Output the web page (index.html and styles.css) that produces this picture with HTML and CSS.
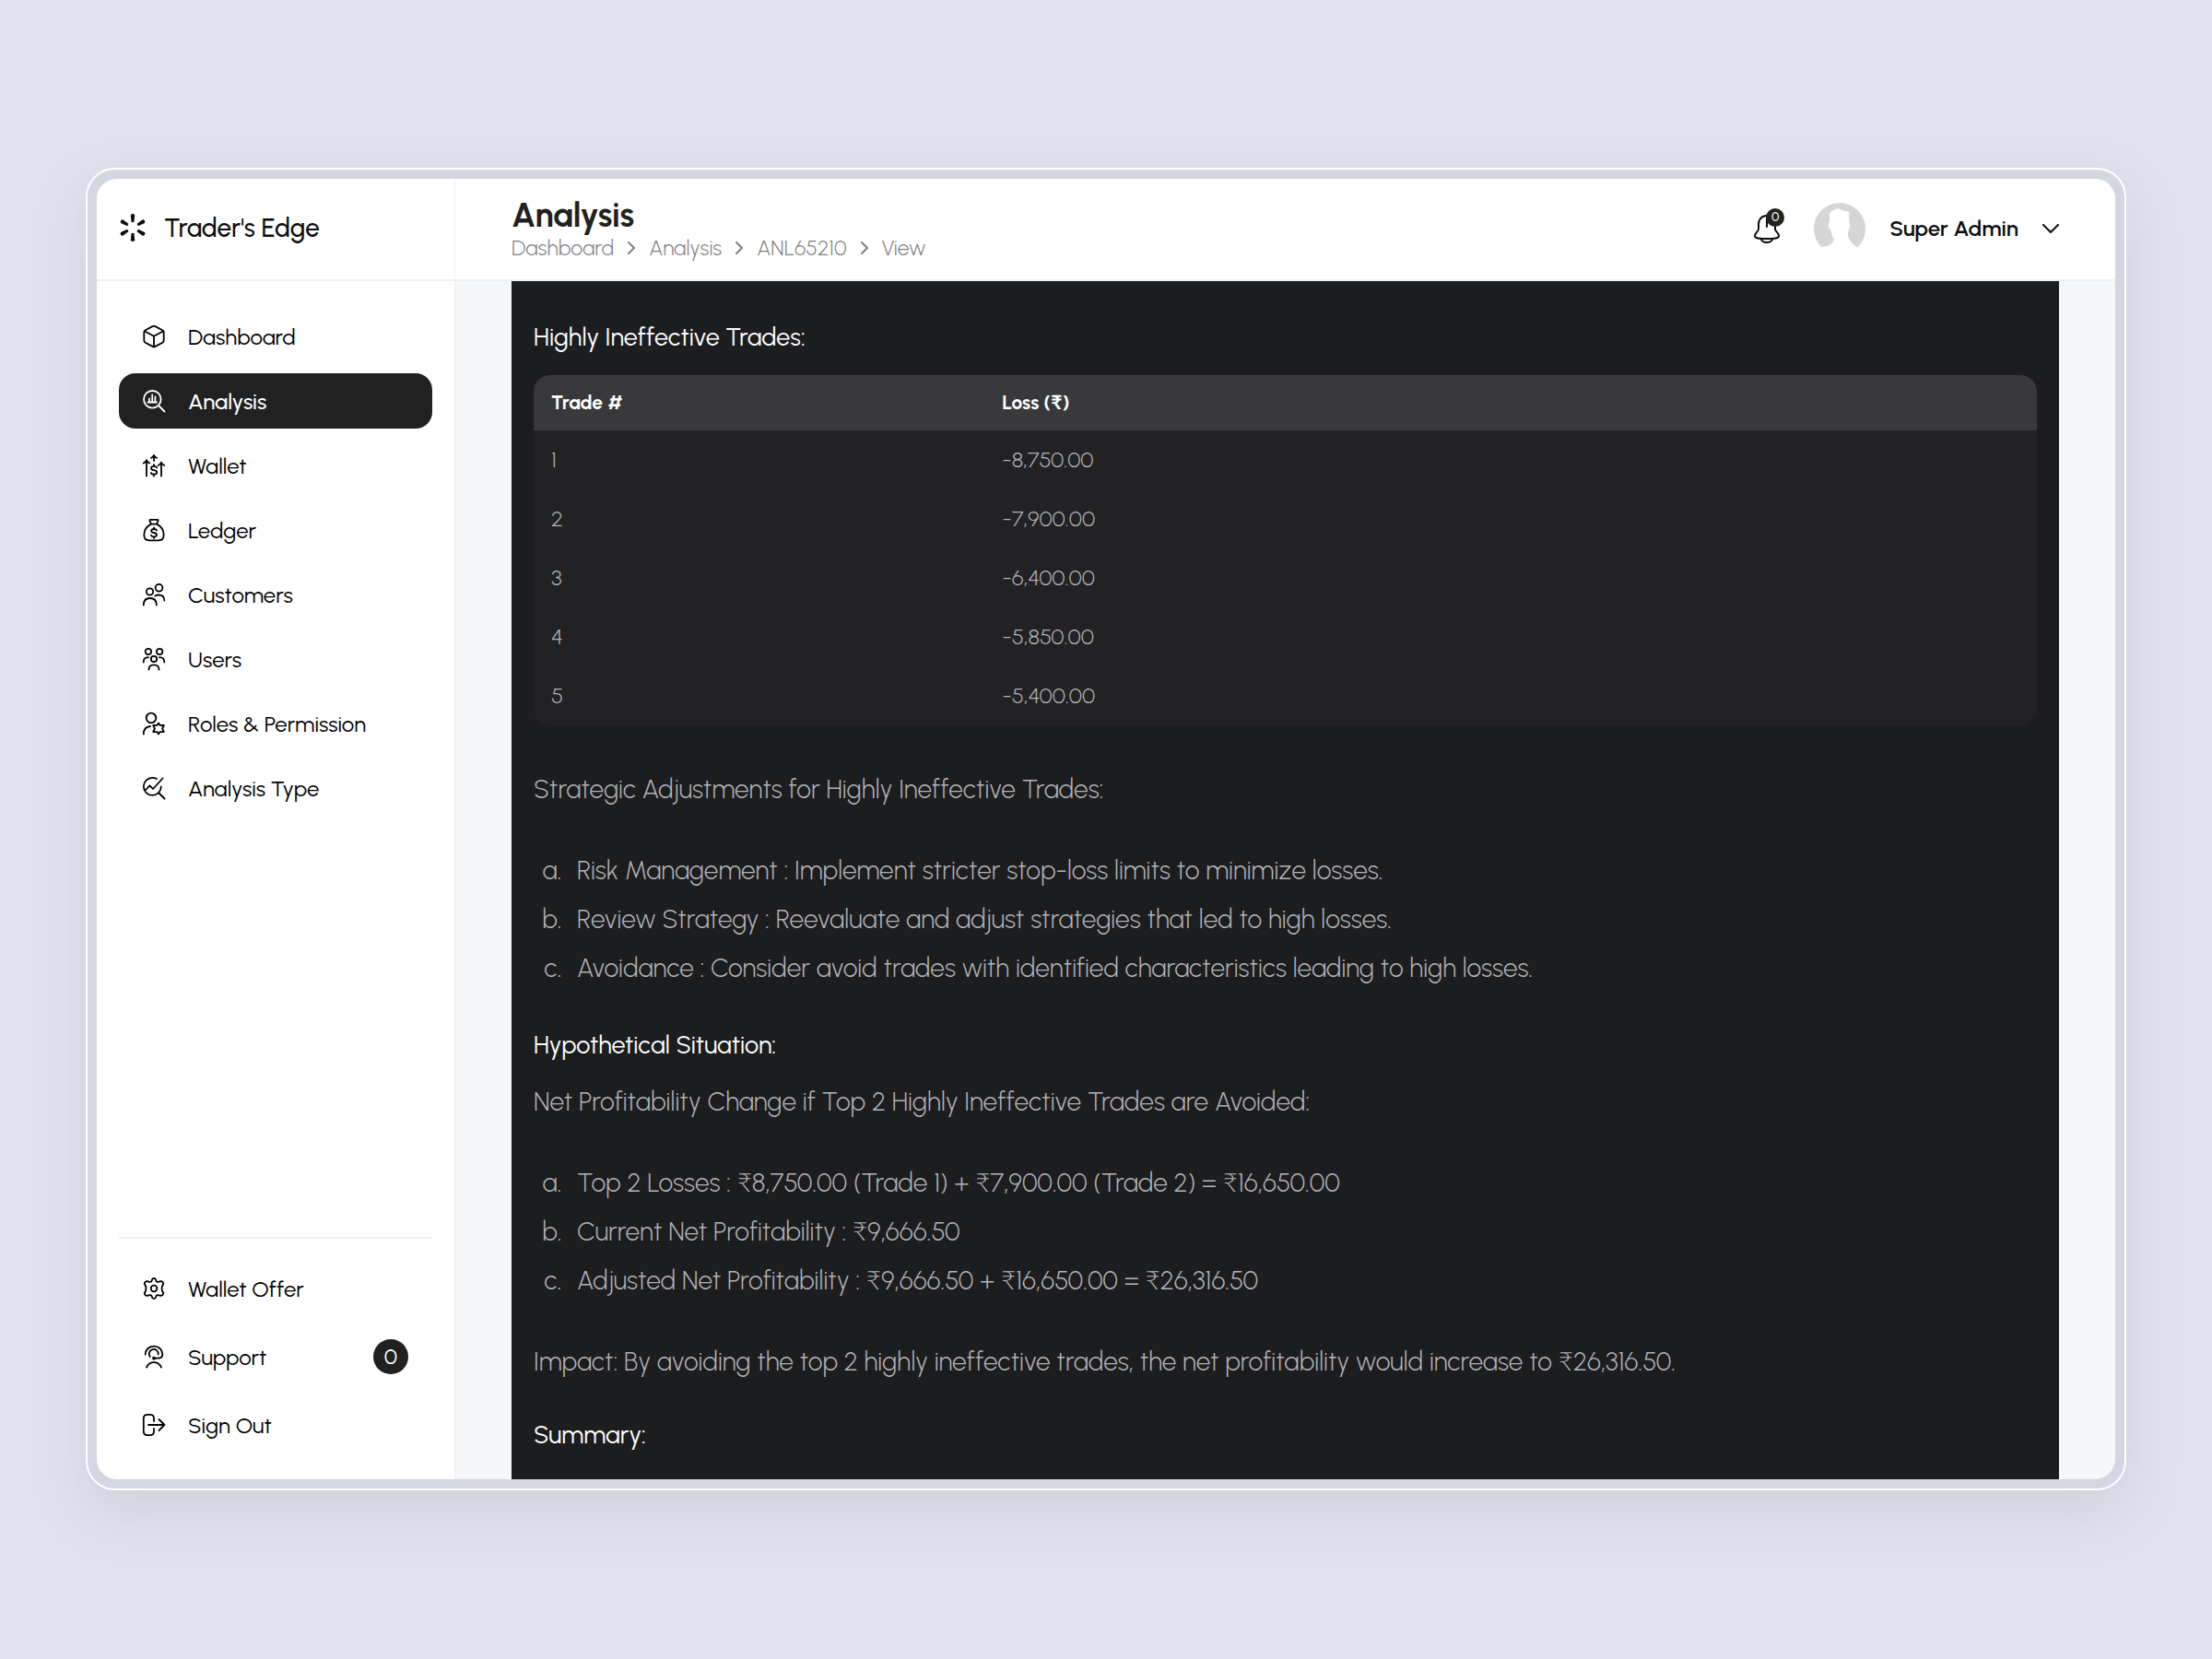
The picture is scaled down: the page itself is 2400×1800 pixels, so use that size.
FILE: index.html
```html
<!DOCTYPE html>
<html lang="en">
<head>
    <meta charset="UTF-8">
    <meta name="viewport" content="width=device-width, initial-scale=1.0">
    <title>Trader's Edge - Analysis</title>
    <link rel="stylesheet" href="styles.css">
</head>
<body>
    <div class="frame">
        <div class="window">
            <aside class="sidebar">
                <a href="#" class="brand">
                    <svg class="brand-logo" viewBox="-15 -15 30 30" aria-hidden="true">
                        <defs>
                            <path id="spoke" d="M-2.2 -13.2Q-2.1 -15 0 -15Q2.1 -15 2.2 -13.2L1.5 -6.6Q1.2 -5.8 0 -5.8Q-1.2 -5.8 -1.5 -6.6Z"/>
                        </defs>
                        <use href="#spoke"/>
                        <use href="#spoke" transform="rotate(60)"/>
                        <use href="#spoke" transform="rotate(120)"/>
                        <use href="#spoke" transform="rotate(180)"/>
                        <use href="#spoke" transform="rotate(240)"/>
                        <use href="#spoke" transform="rotate(300)"/>
                    </svg>
                    <span>Trader's Edge</span>
                </a>

                <nav class="menu">
                    <a href="#" class="menu-item">
                        <svg class="icon" viewBox="0 0 24 24"><path d="M10.5 1.1Q12 .3 13.500 1.100L21.300 5.300Q22.700 6.100 22.700 7.600V16.400Q22.700 17.900 21.300 18.700L13.500 22.900Q12 23.700 10.500 22.900L2.700 18.700Q1.300 17.900 1.300 16.400V7.600Q1.300 6.100 2.700 5.300ZM1.800 6.300L12 11.800L22.200 6.300M12 11.800V23.200"/></svg>
                        <span>Dashboard</span>
                    </a>
                    <a href="#" class="menu-item active">
                        <svg class="icon" viewBox="0 0 24 24"><circle cx="10.300" cy="10.300" r="9.300"/><path d="M17 17L23.500 23.500M5.500 13.500H15M7 13V9.500M10.200 13V5.500M13.400 13V7.500"/></svg>
                        <span>Analysis</span>
                    </a>
                    <a href="#" class="menu-item">
                        <svg class="icon" viewBox="0 0 24 24"><path d="M4 23.500V6.500M.7 9.500Q3.300 8.500 4 6.200Q4.700 8.500 7.300 9.500M20 23.500V9.500M16.700 12Q19.300 11 20 8.700Q20.700 11 23.300 12M12 7V.8M9 3.800Q11.400 3 12 .8Q12.600 3 15 3.800M15.200 14.300Q14.600 12.800 12 12.800Q9 12.800 9 15Q9 16.800 12 17.200Q15.200 17.600 15.200 19.600Q15.200 21.700 12 21.700Q9.300 21.700 8.800 20M12 11V12.800M12 21.700V23.500"/></svg>
                        <span>Wallet</span>
                    </a>
                    <a href="#" class="menu-item">
                        <svg class="icon" viewBox="0 0 24 24"><path d="M9 5.600L7.400 1.800Q7.200 .9 8.200 .9H15.800Q16.800 .9 16.600 1.800L15 5.600ZM9 5.600C4 8 1.300 13 1.300 17.500C1.300 21.500 3.200 23.300 7 23.300H17C20.800 23.300 22.700 21.500 22.700 17.500C22.700 13 20 8 15 5.600M9 5.600H15M15 12.500Q14.500 11 12 11Q9.200 11 9.200 13Q9.200 14.600 12 15Q15 15.400 15 17.200Q15 19.300 12 19.300Q9.500 19.300 9 17.700M12 9.300V11M12 19.300V21"/></svg>
                        <span>Ledger</span>
                    </a>
                    <a href="#" class="menu-item">
                        <svg class="icon" viewBox="0 0 24 24"><circle cx="7.500" cy="9" r="3.700"/><circle cx="17.500" cy="4.800" r="3.900"/><path d="M.8 23.500C.8 18.500 3.500 16 7.800 16C12.100 16 14.800 18.500 14.800 23.500M13.300 13.500Q15 12.500 17 12.500C21 12.500 23.300 14.500 23.300 18.500"/></svg>
                        <span>Customers</span>
                    </a>
                    <a href="#" class="menu-item">
                        <svg class="icon" viewBox="0 0 24 24"><circle cx="5.900" cy="4" r="3.200"/><circle cx="18.100" cy="4" r="3.200"/><circle cx="12" cy="12" r="3.200"/><path d="M.7 15.500C.7 12 2.500 10.200 6 10.200M23.300 15.500C23.300 12 21.500 10.200 18 10.200M6.500 23.500C6.500 20 8.500 18.300 12 18.300C15.500 18.300 17.500 20 17.500 23.500"/></svg>
                        <span>Users</span>
                    </a>
                    <a href="#" class="menu-item">
                        <svg class="icon" viewBox="0 0 24 24"><circle cx="9" cy="6" r="5.300"/><path d="M.8 23.500C.8 18.500 3.500 15.500 8 15M17 11.500L18.600 13.900L22.800 14L21.100 17.500L22.800 21L18.600 21.100L17 23.500L15.400 21.100L11.200 21L12.900 17.500L11.200 14L15.400 13.900Z"/></svg>
                        <span>Roles &amp; Permission</span>
                    </a>
                    <a href="#" class="menu-item">
                        <svg class="icon" viewBox="0 0 24 24"><path d="M15 2Q12.800 .8 10.300 .8A9.500 9.500 0 1 0 19.800 10.300M17 17L23.500 23.500M2.500 14.500L7.500 9.300L11 13L21.500 1.500"/></svg>
                        <span>Analysis Type</span>
                    </a>
                </nav>

                <nav class="menu menu-bottom">
                    <a href="#" class="menu-item">
                        <svg class="icon" viewBox="0 0 24 24"><circle cx="12" cy="12" r="3.300"/><path d="M10.200 2Q12 -.3 13.800 2L14.600 4.200Q15.500 5.200 16.900 4.800L19.200 4.200Q22 4.200 22.300 7L20.900 9.500Q20.200 12 20.900 14.500L22.300 17Q22 19.800 19.200 19.800L16.900 19.200Q15.500 18.800 14.600 19.800L13.800 22Q12 24.300 10.200 22L9.400 19.800Q8.500 18.800 7.100 19.200L4.800 19.800Q2 19.800 1.700 17L3.100 14.500Q3.800 12 3.100 9.500L1.700 7Q2 4.200 4.800 4.200L7.100 4.800Q8.500 5.200 9.400 4.200Z"/></svg>
                        <span>Wallet Offer</span>
                    </a>
                    <a href="#" class="menu-item">
                        <svg class="icon" viewBox="0 0 24 24"><path d="M2.700 9.500A9.300 8.800 0 1 1 21.300 9.200Q21.300 13.700 16.500 13.700H12M7.800 12A5 5 0 1 1 16.700 9.500M4 23.500Q6.500 18.200 12 18.200Q17.500 18.200 20 23.500"/><circle cx="12" cy="13.700" r="1"/></svg>
                        <span>Support</span>
                        <span class="count">0</span>
                    </a>
                    <a href="#" class="menu-item">
                        <svg class="icon" viewBox="0 0 24 24"><path d="M12 8V5Q12 .8 7.800 .8H5Q.8 .8 .8 5V19Q.8 23.200 5 23.200H7.800Q12 23.200 12 19V16M6 12H23.500M17.500 6L23.500 12L17.500 18"/></svg>
                        <span>Sign Out</span>
                    </a>
                </nav>
            </aside>

            <div class="main">
                <header class="topbar">
                    <div class="page-title">
                        <h1>Analysis</h1>
                        <nav class="breadcrumb">
                            <a href="#">Dashboard</a>
                            <svg viewBox="0 0 8 14"><path d="M1 1L7 7L1 13"/></svg>
                            <a href="#">Analysis</a>
                            <svg viewBox="0 0 8 14"><path d="M1 1L7 7L1 13"/></svg>
                            <a href="#">ANL65210</a>
                            <svg viewBox="0 0 8 14"><path d="M1 1L7 7L1 13"/></svg>
                            <span>View</span>
                        </nav>
                    </div>
                    <div class="topbar-right">
                        <button type="button" class="bell" aria-label="Notifications">
                            <svg viewBox="0 0 30 32"><path d="M15 2C9 2 6 6.500 6 11.500V16.500C6 19 2 20.500 2 24C2 26.500 6 27 15 27C24 27 28 26.500 28 24C28 20.500 24 19 24 16.500V11.500C24 6.500 21 2 15 2ZM8.500 27C9.500 30 12 31 15 31C18 31 20.500 30 21.500 27M15 5V14"/></svg>
                            <span class="bell-count">0</span>
                        </button>
                        <button type="button" class="profile">
                            <svg class="avatar" viewBox="0 0 56 56" aria-hidden="true">
                                <circle cx="28" cy="28" r="28" fill="#d6d6d5"/>
                                <path fill="#fff" d="M17 13C18 9 21 8 26 6C29 8 34 9 39 10C37 13 39 18 38 21C40 23 39 27 38 29C36 34 37 38 40 42Q43 46 47 48H56V56H0V48H9Q19 47 22 40C20 37 19 33 18 29C15 27 15 23 17 21Z"/>
                            </svg>
                            <span>Super Admin</span>
                            <svg class="arrow" viewBox="0 0 18 10"><path d="M1 1L9 9L17 1"/></svg>
                        </button>
                    </div>
                </header>

                <div class="content">
                    <article class="report">
                        <h3>Highly Ineffective Trades:</h3>
                        <table class="trades">
                            <thead>
                                <tr><th>Trade #</th><th>Loss (₹)</th></tr>
                            </thead>
                            <tbody>
                                <tr><td>1</td><td>-8,750.00</td></tr>
                                <tr><td>2</td><td>-7,900.00</td></tr>
                                <tr><td>3</td><td>-6,400.00</td></tr>
                                <tr><td>4</td><td>-5,850.00</td></tr>
                                <tr><td>5</td><td>-5,400.00</td></tr>
                            </tbody>
                        </table>

                        <p>Strategic Adjustments for Highly Ineffective Trades:</p>
                        <ol>
                            <li>Risk Management : Implement stricter stop-loss limits to minimize losses.</li>
                            <li>Review Strategy : Reevaluate and adjust strategies that led to high losses.</li>
                            <li>Avoidance : Consider avoid trades with identified characteristics leading to high losses.</li>
                        </ol>

                        <h3>Hypothetical Situation:</h3>
                        <p>Net Profitability Change if Top 2 Highly Ineffective Trades are Avoided:</p>
                        <ol>
                            <li>Top 2 Losses : ₹8,750.00 (Trade 1) + ₹7,900.00 (Trade 2) = ₹16,650.00</li>
                            <li>Current Net Profitability : ₹9,666.50</li>
                            <li>Adjusted Net Profitability : ₹9,666.50 + ₹16,650.00 = ₹26,316.50</li>
                        </ol>
                        <p>Impact: By avoiding the top 2 highly ineffective trades, the net profitability would increase to ₹26,316.50.</p>

                        <h3>Summary:</h3>
                    </article>
                </div>
            </div>
        </div>
    </div>
</body>
</html>
```

FILE: styles.css
```css
* {
    margin: 0;
    padding: 0;
    box-sizing: border-box;
}

body {
    height: 100vh;
    padding: 182px 93px 183px;
    display: flex;
    background-color: #e0e3ec;
    font-family: Urbanist, Lato, "Noto Sans", sans-serif;
    font-size: 24px;
    color: #0d0d0d;
}

a {
    color: inherit;
    text-decoration: none;
}

button {
    border: none;
    background: none;
    font: inherit;
    color: inherit;
    cursor: pointer;
}

svg {
    flex-shrink: 0;
    fill: none;
    stroke: currentColor;
    stroke-linecap: round;
    stroke-linejoin: round;
}

.frame {
    flex: 1;
    min-width: 0;
    display: flex;
    padding: 10px;
    border: 2px solid #fff;
    border-radius: 32px;
    background-color: #d4d6e1;
    box-shadow: 0 24px 60px rgba(120, 125, 150, 0.18);
}

.window {
    flex: 1;
    min-width: 0;
    display: flex;
    border-radius: 22px;
    overflow: hidden;
    background-color: #f5f7f9;
}

/* Sidebar */

.sidebar {
    width: 389px;
    flex-shrink: 0;
    display: flex;
    flex-direction: column;
    background-color: #fff;
    border-right: 1px solid #edf1f4;
}

.brand {
    height: 111px;
    flex-shrink: 0;
    display: flex;
    align-items: center;
    gap: 19px;
    padding: 0 24px 4px;
    border-bottom: 2px solid #edf1f4;
    font-size: 28px;
    font-weight: 500;
}

.brand-logo {
    width: 30px;
    height: 30px;
    fill: currentColor;
    stroke: none;
}

.menu {
    display: flex;
    flex-direction: column;
    gap: 10px;
    padding: 30px 24px;
}

.menu-item {
    height: 60px;
    display: flex;
    align-items: center;
    gap: 25px;
    padding: 0 26px;
    border-radius: 18px;
    color: #000;
}

.menu-item.active {
    background-color: #212121;
    color: #fff;
    font-weight: 500;
}

.icon {
    width: 24px;
    height: 24px;
    stroke-width: 1.8;
    overflow: visible;
}

.count {
    width: 38px;
    height: 38px;
    margin-left: auto;
    border-radius: 50%;
    background-color: #212121;
    color: #fff;
    line-height: 38px;
    text-align: center;
}

.menu-bottom {
    gap: 14px;
    margin: auto 24px 0;
    padding: 24px 0 29px;
    border-top: 2px solid #edf1f4;
}

/* Main area */

.main {
    flex: 1;
    min-width: 0;
    display: flex;
    flex-direction: column;
}

.topbar {
    height: 111px;
    flex-shrink: 0;
    display: flex;
    align-items: center;
    justify-content: space-between;
    padding: 0 61px 2px;
    background-color: #fff;
    border-bottom: 2px solid #edf1f4;
}

.page-title {
    padding-top: 4px;
}

.page-title h1 {
    font-size: 36px;
    line-height: 38px;
    font-weight: 700;
    color: #212121;
}

.breadcrumb {
    display: flex;
    align-items: center;
    gap: 15px;
    line-height: 32px;
    font-size: 23px;
    font-weight: 300;
    color: #808080;
}

.breadcrumb svg {
    width: 8px;
    height: 14px;
    stroke-width: 2;
}

.topbar-right {
    display: flex;
    align-items: center;
    gap: 36px;
}

.bell {
    position: relative;
    display: flex;
}

.bell svg {
    width: 30px;
    height: 32px;
    stroke-width: 2;
}

.bell-count {
    position: absolute;
    top: -6px;
    right: -4px;
    width: 20px;
    height: 20px;
    border-radius: 50%;
    background-color: #212121;
    color: #fff;
    font-size: 14px;
    font-weight: 500;
    line-height: 20px;
    text-align: center;
}

.profile {
    display: flex;
    align-items: center;
    gap: 26px;
    font-weight: 600;
}

.avatar {
    width: 56px;
    height: 56px;
    stroke: none;
}

.arrow {
    width: 18px;
    height: 10px;
    stroke-width: 2;
}

.content {
    flex: 1;
    min-height: 0;
    overflow: hidden;
    padding: 0 61px;
}

.report {
    min-height: 100%;
    padding: 34px 24px;
    background-color: #1c1d1f;
    color: #b2b2b7;
    font-size: 28px;
    font-weight: 300;
    line-height: 53px;
}

.report h3 {
    font-size: 27px;
    font-weight: 400;
    color: #fff;
}

.report h3 + p {
    margin-top: 9px;
}

.report p + h3 {
    margin-top: 26px;
}

.report ol {
    margin: 35px 0 30px;
    padding-left: 37px;
    list-style: lower-alpha;
}

.report li {
    padding-left: 10px;
}

.report ol + p {
    margin-top: 35px;
}

.trades {
    width: 100%;
    margin: 15px 0 43px;
    table-layout: fixed;
    border-spacing: 0;
    border-radius: 18px;
    overflow: hidden;
    background-color: #222224;
    font-size: 24px;
    line-height: 24px;
    text-align: left;
}

.trades th,
.trades td {
    height: 64px;
    padding: 0 19px;
}

.trades th {
    height: 60px;
    background-color: #39393b;
    color: #fff;
    font-size: 21px;
    font-weight: 700;
}

.trades th:first-child {
    width: 30%;
}
```
